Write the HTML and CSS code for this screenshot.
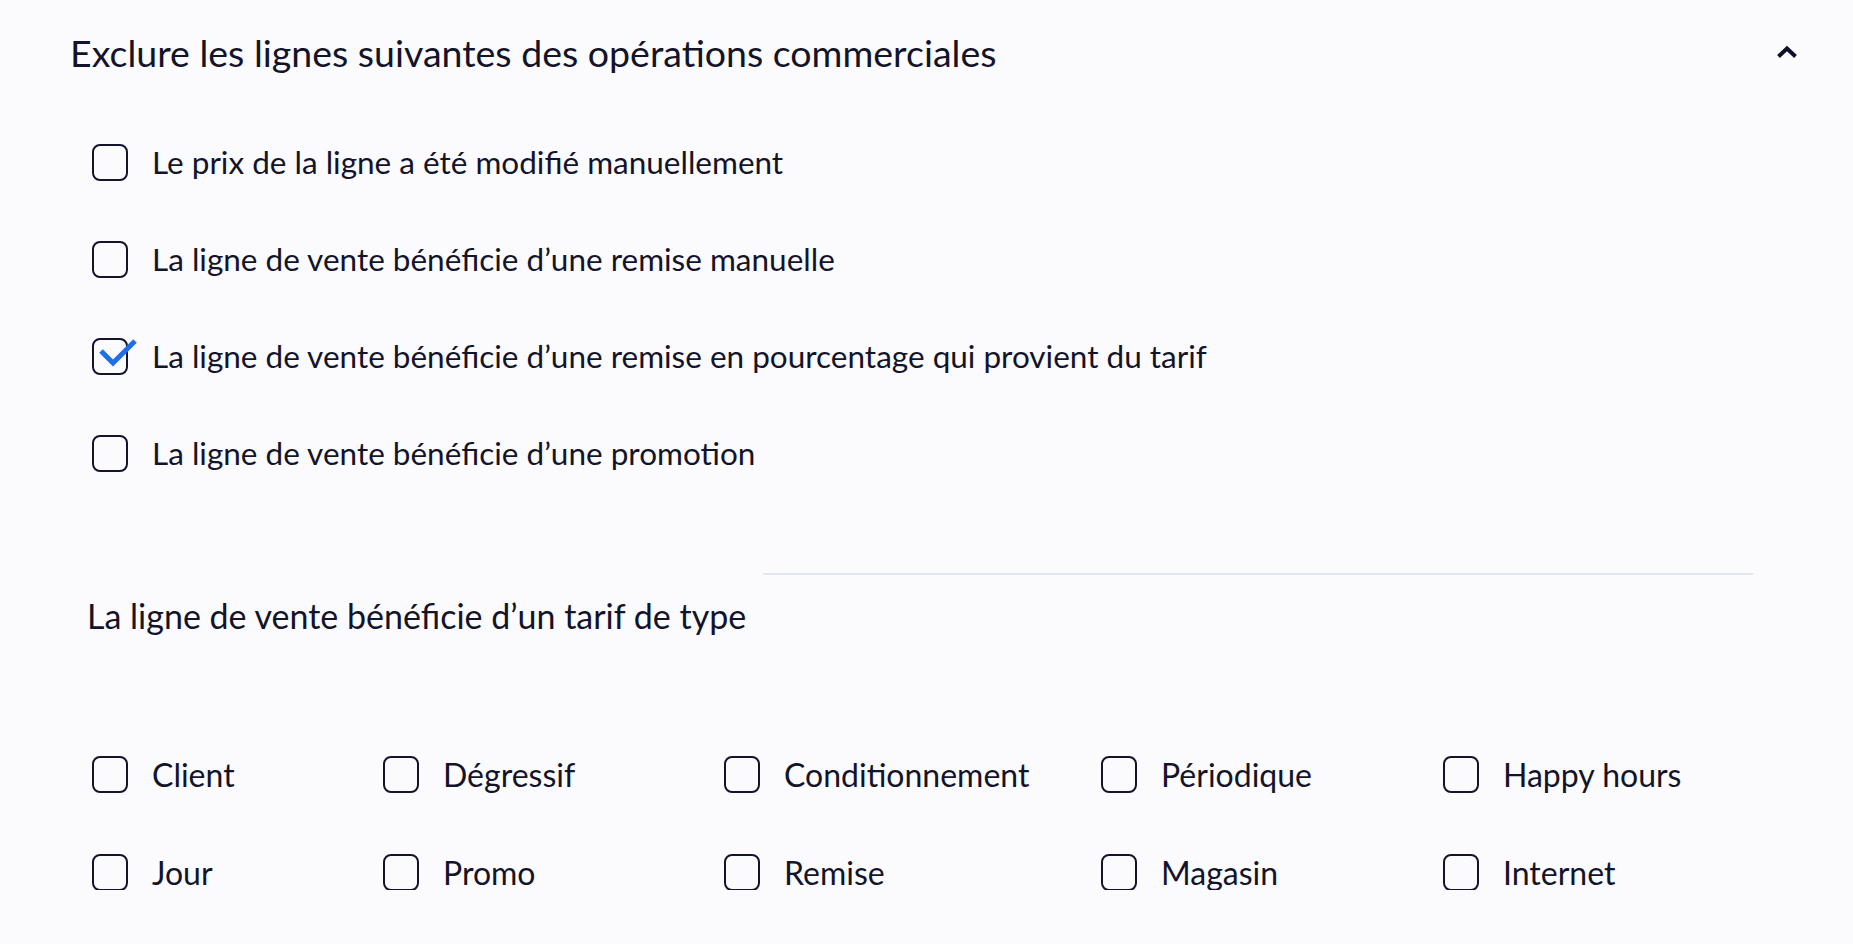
FILE: index.html
```html
<!DOCTYPE html>
<html lang="fr">
<head>
  <meta charset="UTF-8">
  <meta name="viewport" content="width=device-width, initial-scale=1.0">
  <title>Exclusions des opérations commerciales</title>
  <link rel="stylesheet" href="styles.css">
</head>
<body>
  <section class="panel">
    <div class="panel-head">
      <h2>Exclure les lignes suivantes des opéra&zwnj;tions commerciales</h2>
      <button class="toggle" aria-label="Replier">
        <svg width="22" height="14" viewBox="0 0 22 14"><path d="M2.5 11.5 L11 3.5 L19.5 11.5" fill="none" stroke="#0f1026" stroke-width="4"/></svg>
      </button>
    </div>

    <div class="options">
      <label class="option"><span class="box"></span>Le prix de la ligne a été modifié manuellement</label>
      <label class="option"><span class="box"></span>La ligne de vente bénéficie d’une remise manuelle</label>
      <label class="option"><span class="box checked"><svg width="44" height="30" viewBox="0 0 44 30"><path d="M7 12 L19 24 L41 2" fill="none" stroke="#1f6fe8" stroke-width="5" stroke-linejoin="miter"/></svg></span>La ligne de vente bénéficie d’une remise en pourcentage qui provient du tarif</label>
      <label class="option"><span class="box"></span>La ligne de vente bénéficie d’une promotion</label>
    </div>

    <div class="subhead">
      <h3>La ligne de vente bénéficie d’un tarif de type</h3>
      <div class="rule"></div>
    </div>

    <div class="types">
      <label class="option"><span class="box"></span>Client</label>
      <label class="option"><span class="box"></span>Dégressif</label>
      <label class="option"><span class="box"></span>Condi&zwnj;tionnement</label>
      <label class="option"><span class="box"></span>Périodique</label>
      <label class="option"><span class="box"></span>Happy hours</label>
      <label class="option"><span class="box"></span>Jour</label>
      <label class="option"><span class="box"></span>Promo</label>
      <label class="option"><span class="box"></span>Remise</label>
      <label class="option"><span class="box"></span>Magasin</label>
      <label class="option"><span class="box"></span>Internet</label>
    </div>
  </section>
</body>
</html>
```

FILE: styles.css
```css
body {
  margin: 0;
  background-color: #fbfbfe;
  color: #13142a;
  font-family: Lato, "Open Sans", sans-serif;
}
.panel {
  padding: 0 55px 0 70px;
}
.panel-head {
  display: flex;
  align-items: center;
  justify-content: space-between;
  height: 104px;
}
h2 {
  margin: 0;
  font-size: 37.5px;
  font-weight: 400;
}
.toggle {
  background: none;
  border: none;
  padding: 0;
  width: 22px;
  height: 14px;
  cursor: pointer;
}
.toggle svg {
  display: block;
}
.options {
  display: flex;
  flex-direction: column;
  gap: 61px;
  margin-top: 40px;
  padding-left: 22px;
}
.option {
  display: flex;
  align-items: center;
  height: 36px;
  font-size: 31.5px;
  white-space: nowrap;
}
.box {
  position: relative;
  flex: none;
  width: 32px;
  height: 33px;
  margin-right: 24px;
  border: 2px solid #13142a;
  border-radius: 8px;
}
.box svg {
  position: absolute;
  left: 0;
  top: -1px;
}
.subhead {
  display: flex;
  align-items: flex-start;
  margin-top: 102px;
  padding-left: 17px;
}
h3 {
  margin: 22px 0 0;
  font-size: 34px;
  font-weight: 400;
}
.rule {
  flex: 1;
  margin: 0 45px 0 17px;
  border-top: 2px solid #e2e6ed;
}
.types {
  display: grid;
  grid-template-columns: 291px 341px 377px 342px auto;
  row-gap: 62px;
  margin-top: 120px;
  padding-left: 22px;
}
.types .option {
  font-size: 32px;
}
```
